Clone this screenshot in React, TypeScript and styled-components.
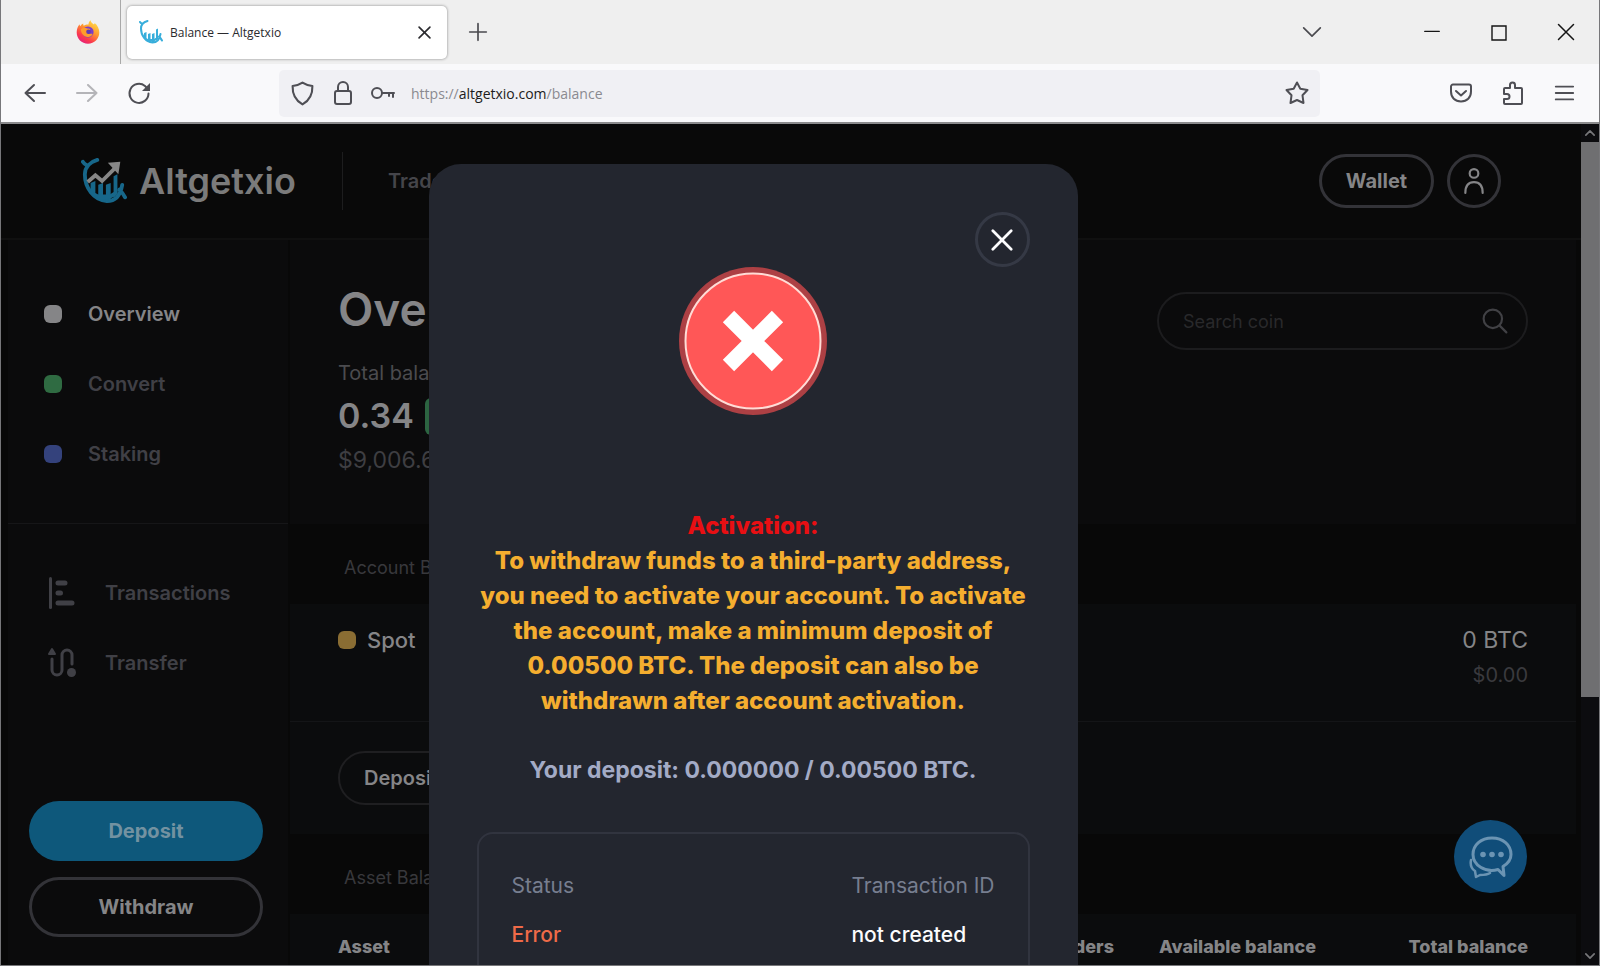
import React from "react";
import styled, { createGlobalStyle } from "styled-components";

const display = `Inter, "Open Sans", "Noto Sans", sans-serif`;
const chrome = `"Open Sans", "Noto Sans", sans-serif`;

const GlobalStyle = createGlobalStyle`
  *, *::before, *::after { box-sizing: border-box; }
  html, body { margin: 0; padding: 0; background: #080808; }
  button, input { font: inherit; color: inherit; margin: 0; }
  button { border: 0; padding: 0; background: none; cursor: pointer; }
  h1, h2, p, dl, dd, ul { margin: 0; padding: 0; }
  ul { list-style: none; }
  a { color: inherit; text-decoration: none; }
  svg { display: block; }
`;

/* ---------- browser window ---------- */

const Window = styled.div`
  display: flex;
  flex-direction: column;
  height: 100vh;
  border: 1px solid #77777a;
  border-top: 0;
  overflow: hidden;
  font-family: ${display};
`;

const TabBar = styled.div`
  display: flex;
  align-items: center;
  flex: none;
  height: 64px;
  background: #efefef;
  color: #4a4a4f;
`;

const PinnedTab = styled.div`
  display: flex;
  align-items: center;
  justify-content: flex-end;
  width: 120px;
  height: 100%;
  padding-right: 20px;
  border-right: 1px solid #a9a9a9;
`;

const Tab = styled.div`
  display: flex;
  align-items: center;
  gap: 7px;
  width: 320px;
  height: 53px;
  margin-left: 6px;
  padding: 0 16px 0 12px;
  border-radius: 5px;
  background: #fff;
  box-shadow: 0 0 3px rgba(0, 0, 0, 0.45);
  color: #2a2a2e;
  font: 12px ${chrome};
`;

const TabTitle = styled.span`
  flex: 1;
`;

const NewTab = styled.button`
  margin-left: 21px;
`;

const WindowControls = styled.div`
  display: flex;
  align-items: center;
  gap: 50px;
  margin-left: auto;
  padding-right: 24px;
  color: #151515;
`;

const TabsMenu = styled.button`
  margin-right: 52px;
  color: #4a4a4f;
`;

const NavBar = styled.div`
  display: flex;
  align-items: center;
  flex: none;
  height: 60px;
  padding: 0 24px 0 22px;
  background: #f9f9fb;
  border-bottom: 2px solid #8b8b8d;
  color: #4f4f55;
`;

const NavButtons = styled.div`
  display: flex;
  gap: 28px;
  width: 256px;
`;

const NavButton = styled.button<{ $dim?: boolean }>`
  opacity: ${(p) => (p.$dim ? 0.4 : 1)};
`;

const AddressBar = styled.div`
  display: flex;
  align-items: center;
  flex: 1;
  gap: 16px;
  height: 47px;
  padding: 0 11px;
  border-radius: 5px;
  background: #f0f0f4;
`;

const Address = styled.div`
  flex: 1;
  color: #8a8a90;
  font: 14px ${chrome};
  b {
    color: #1c1c20;
    font-weight: 400;
  }
`;

const NavTools = styled.div`
  display: flex;
  justify-content: flex-end;
  gap: 28px;
  width: 255px;
`;

const Viewport = styled.div`
  display: flex;
  flex: 1;
  min-height: 0;
  background: #080808;
`;

const Scrollbar = styled.div`
  display: flex;
  flex-direction: column;
  align-items: center;
  width: 18px;
  background: #0c0c0f;
  color: #77777a;
`;

const ScrollArrow = styled.button`
  display: grid;
  place-items: center;
  width: 100%;
  height: 18px;
`;

const ScrollTrack = styled.div`
  flex: 1;
  width: 100%;
`;

const ScrollThumb = styled.div`
  height: 69%;
  background: #6f6f71;
`;

/* ---------- site ---------- */

const Page = styled.div`
  position: relative;
  display: flex;
  flex-direction: column;
  flex: 1;
  min-width: 0;
  overflow: hidden;
  color: #858587;
`;

const Header = styled.header`
  display: flex;
  align-items: center;
  flex: none;
  height: 116px;
  padding: 0 80px;
  background: #090909;
  border-bottom: 2px solid #101010;
`;

const Brand = styled.a`
  display: flex;
  align-items: center;
  gap: 12px;
  width: 261px;
  color: #7b7b7b;
  font-size: 36px;
  font-weight: 600;
`;

const HeaderNav = styled.nav`
  display: flex;
  align-items: center;
  flex: 1;
  height: 58px;
  padding-left: 45px;
  border-left: 1px solid #1d1d1e;
  color: #45454a;
  font-size: 20px;
  font-weight: 600;
`;

const HeaderActions = styled.div`
  display: flex;
  gap: 13px;
`;

const WalletButton = styled.button`
  width: 115px;
  height: 54px;
  border: 3px solid #333338;
  border-radius: 27px;
  font-size: 20px;
  font-weight: 700;
`;

const ProfileButton = styled.button`
  display: grid;
  place-items: center;
  width: 54px;
  height: 54px;
  border: 3px solid #333338;
  border-radius: 50%;
`;

const Body = styled.div`
  display: flex;
  flex: 1;
  gap: 2px;
  min-height: 0;
  padding: 0 5px 0 7px;
`;

const Sidebar = styled.aside`
  display: flex;
  flex-direction: column;
  flex: none;
  width: 280px;
  padding-bottom: 28px;
  background: #0b0b0c;
`;

const SideList = styled.ul<{ $divided?: boolean }>`
  padding: ${(p) => (p.$divided ? "34px 0 0" : "39px 0 34px")};
  border-top: ${(p) => (p.$divided ? "1px solid #161618" : "0")};
`;

const SideLink = styled.a<{ $active?: boolean; $icon?: boolean }>`
  display: flex;
  align-items: center;
  gap: ${(p) => (p.$icon ? 28 : 26)}px;
  height: 70px;
  padding-left: ${(p) => (p.$icon ? 39 : 36)}px;
  color: ${(p) => (p.$active ? "#858587" : "#404046")};
  font-size: 20px;
  font-weight: 600;
`;

const Marker = styled.span<{ $color: string }>`
  flex: none;
  width: 18px;
  height: 18px;
  border-radius: 6px;
  background: ${(p) => p.$color};
`;

const SideActions = styled.div`
  display: flex;
  flex-direction: column;
  gap: 16px;
  margin-top: auto;
  padding: 0 25px 0 21px;
`;

const PillButton = styled.button<{ $primary?: boolean }>`
  height: 60px;
  border: ${(p) => (p.$primary ? "0" : "3px solid #333338")};
  border-radius: 30px;
  background: ${(p) => (p.$primary ? "#0e587b" : "transparent")};
  color: ${(p) => (p.$primary ? "#7392a1" : "#858587")};
  font-size: 20px;
  font-weight: 700;
`;

const Main = styled.main`
  flex: 1;
  min-width: 0;
  overflow: hidden;
`;

const Summary = styled.section`
  display: flex;
  justify-content: space-between;
  height: 284px;
  padding: 42px 48px 0;
  background: #0b0b0c;
  h1 {
    font-size: 46px;
    line-height: 54px;
    font-weight: 600;
  }
`;

const SummaryLabel = styled.p`
  margin-top: 20px;
  color: #4b4b4f;
  font-size: 20px;
  line-height: 34px;
`;

const SummaryAmount = styled.p`
  display: flex;
  align-items: center;
  gap: 11px;
  font-size: 34px;
  line-height: 52px;
  font-weight: 600;
`;

const Badge = styled.span`
  padding: 0 12px;
  border-radius: 6px;
  background: #2c6441;
  font-size: 20px;
  line-height: 37px;
`;

const SummaryFiat = styled.p`
  color: #3e3e42;
  font-size: 23px;
  line-height: 36px;
`;

const Search = styled.form`
  display: flex;
  align-items: center;
  width: 371px;
  height: 58px;
  margin-top: 10px;
  padding: 0 18px 0 24px;
  border: 2px solid #1c1c1e;
  border-radius: 29px;
  color: #414145;
`;

const SearchInput = styled.input`
  flex: 1;
  min-width: 0;
  padding: 0;
  border: 0;
  outline: 0;
  background: transparent;
  font-size: 18px;
  &::placeholder {
    color: #29292b;
    opacity: 1;
  }
`;

const SectionTitle = styled.h2`
  padding-left: 54px;
  color: #38383c;
  font-size: 18px;
  font-weight: 400;
  line-height: 72px;
  padding-top: 8px;
`;

const Account = styled.section`
  display: flex;
  justify-content: space-between;
  height: 118px;
  padding: 18px 48px;
  background: #0b0c0d;
  border-bottom: 1px solid #141517;
`;

const AccountName = styled.div`
  display: flex;
  align-items: center;
  gap: 11px;
  height: 36px;
  font-size: 22px;
  font-weight: 500;
`;

const AccountValue = styled.div`
  text-align: right;
  font-size: 23px;
  line-height: 36px;
  p + p {
    color: #3a3a3e;
    font-size: 20px;
    line-height: 34px;
  }
`;

const AccountActions = styled.div`
  height: 112px;
  padding: 29px 48px;
  background: #0b0c0d;
`;

const OutlineButton = styled.button`
  height: 54px;
  padding: 0 24px;
  border: 2px solid #1f1f21;
  border-radius: 27px;
  font-size: 20px;
  font-weight: 600;
`;

const AssetPanel = styled.section`
  padding: 19px 48px;
  background: #0b0c0d;
`;

const AssetTable = styled.table`
  width: 100%;
  table-layout: fixed;
  border-collapse: collapse;
  th {
    padding: 0;
    font-size: 18px;
    line-height: 28px;
    font-weight: 800;
    text-align: right;
    white-space: nowrap;
  }
  th:first-child {
    text-align: left;
  }
  th:nth-child(3) {
    width: 202px;
  }
  th:nth-child(4) {
    width: 212px;
  }
`;

const ChatButton = styled.button`
  position: absolute;
  right: 54px;
  bottom: 72px;
  display: grid;
  place-items: center;
  width: 73px;
  height: 73px;
  border-radius: 50%;
  background: #104d79;
`;

/* ---------- dialog ---------- */

const Overlay = styled.div`
  position: absolute;
  inset: 0;
  display: flex;
  justify-content: center;
  align-items: flex-start;
  padding: 40px 76px 0 0;
`;

const Dialog = styled.div`
  display: flex;
  flex-direction: column;
  width: 649px;
  padding: 48px;
  border-radius: 32px;
  background: #23262f;
`;

const CloseButton = styled.button`
  display: grid;
  place-items: center;
  align-self: flex-end;
  width: 55px;
  height: 55px;
  border: 3px solid #353945;
  border-radius: 50%;
  color: #fcfcfd;
`;

const ErrorArt = styled.div`
  align-self: center;
`;

const Message = styled.div`
  display: flex;
  flex-direction: column;
  align-items: center;
  margin-top: 93px;
  color: #f5ae2f;
  font-size: 24px;
  font-weight: 800;
  line-height: 35px;
  text-align: center;
  white-space: nowrap;
  h2 {
    color: #e80f13;
    font: inherit;
  }
`;

const DepositLine = styled.p`
  margin-top: 35px;
  color: #a3abc6;
  font-size: 23px;
  font-weight: 700;
`;

const Details = styled.dl`
  display: flex;
  justify-content: space-between;
  margin-top: 44px;
  padding: 35px 33px 60px;
  border: 2px solid #31343f;
  border-radius: 16px;
  font-size: 21px;
  line-height: 34px;
  dt {
    color: #777e90;
  }
  dd {
    margin-top: 15px;
  }
`;

const DetailValue = styled.dd<{ $error?: boolean }>`
  color: ${(p) => (p.$error ? "#ef6a48" : "#fcfcfd")};
  font-weight: 500;
`;

/* ---------- drawings ---------- */

type StrokeProps = { size: number; width?: number; children: React.ReactNode };
const Icon = ({ size, width = 2, children }: StrokeProps) => (
  <svg width={size} height={size} viewBox="0 0 24 24" fill="none" stroke="currentColor"
    strokeWidth={width} strokeLinecap="round" strokeLinejoin="round" aria-hidden="true">
    {children}
  </svg>
);

const Firefox = () => (
  <svg width="24" height="24" viewBox="0 0 24 24" aria-hidden="true">
    <defs>
      <linearGradient id="flame" x1="0.85" y1="0.05" x2="0.25" y2="1">
        <stop offset="0" stopColor="#ffe14a" />
        <stop offset="0.4" stopColor="#ff9a2e" />
        <stop offset="0.75" stopColor="#fb3a4c" />
        <stop offset="1" stopColor="#e31d80" />
      </linearGradient>
    </defs>
    <path fill="url(#flame)" d="M12.5 4.5C12.6 2.6 13.4 1.2 14.6.3c.1 1.8 1.4 2.8 2.8 4 1-.1 1.2-.8 1.2-1.4C21.500 5 23.300 8.600 23.300 12.500 23.300 18.700 18.300 23.700 12 23.700S.7 18.700.7 12.500C.7 9.500 1.700 6.500 3.600 4.300c0 .8.2 1.500.6 2 .9-1.300 1.900-2.300 3-2.800-.1.900.1 1.700.5 2.300 1.300-.9 3-1.400 4.800-1.300z" />
    <circle cx="12" cy="12" r="5.600" fill="#7a3fc8" />
    <path fill="#ff9c2b" d="M4.800 9.200C6.300 7.600 9 7 11.300 8.500c1.700.1 2.800.3 3 .9-.3 1-1.900 1.400-2.900 1.900-.8.600-.6 1.800.6 2.300 1.500.5 3.200-.2 4.600.4-.8 2.200-3 3.300-5.100 3C7.700 16.500 5 13.500 4.800 9.200z" />
    <circle cx="12.500" cy="11.700" r="2.300" fill="#5f3bb5" />
  </svg>
);

const BrandMark = ({ size, color, arrow }: { size: number; color: string; arrow?: string }) => (
  <svg width={size} height={size} viewBox="0 0 48 48" fill="none" aria-hidden="true">
    <path d="M2 4c1 2 3 3 5 4M17 2C10 4 4 9 4 17c0 14 9 27 23 28 8 0 14-5 16-17M40 33c2 2 4 4 6 8"
      stroke={color} strokeWidth="4" strokeLinecap="round" />
    <path d="M10 26l5-2v17l-5-4zM18 28l5-2v19l-5-2zM26 28l5-2v18l-5 1zM34 19l4-2v20l-4 5z" fill={color} />
    <path d="M8 33l10 5h12l8-5v4c-6 8-22 10-30-4z" fill={color} />
    {arrow && (
      <>
        <path d="M7 25l8-7 7 6L36 10" stroke={arrow} strokeWidth="4" />
        <path d="M28 5l13-1-2 13z" fill={arrow} />
      </>
    )}
  </svg>
);

const TransactionsIcon = () => (
  <svg width="30" height="32" viewBox="0 0 30 32" stroke="#404046" strokeLinecap="round" aria-hidden="true">
    <path d="M3.500 1.500v29" strokeWidth="3" />
    <path d="M11 6h7M11 16h2.500M11 26h14" strokeWidth="5" />
  </svg>
);

const TransferIcon = () => (
  <svg width="30" height="32" viewBox="0 0 30 32" fill="none" stroke="#404046" strokeLinecap="round" aria-hidden="true">
    <path d="M5 12v11a5 5 0 0 0 10 0V8a5 5 0 0 1 10 0v9" strokeWidth="3" />
    <path d="M5 2L8 7H2z" fill="#404046" strokeWidth="2" strokeLinejoin="round" />
    <circle cx="24.500" cy="25.500" r="4.500" fill="#404046" stroke="none" />
  </svg>
);

const ChatIcon = () => (
  <svg width="44" height="44" viewBox="0 0 44 44" fill="none" stroke="#6b94b3" strokeWidth="3"
    strokeLinecap="round" strokeLinejoin="round" aria-hidden="true">
    <path d="M29 34.500C16 38 4 30 4 19.500 4 10 12 3 23 3s19 7 19 16.500c0 5-3 9-8 12l1 9z" />
    <path d="M2 25c-1 5 1 9 4 11l1 6 4-2c4 0 7 0 10-2" strokeWidth="2.500" />
    <g fill="#6b94b3" stroke="none">
      <circle cx="14" cy="19.500" r="2.800" />
      <circle cx="23" cy="19.500" r="2.800" />
      <circle cx="32" cy="19.500" r="2.800" />
    </g>
  </svg>
);

const ErrorIcon = () => (
  <svg width="148" height="148" viewBox="0 0 148 148" aria-hidden="true">
    <circle cx="74" cy="74" r="74" fill="#ad4044" />
    <circle cx="74" cy="74" r="67.500" fill="#ff5757" stroke="#ffdcd6" strokeWidth="2" />
    <path d="M49.500 49.500l49 49M98.500 49.500l-49 49" stroke="#fff" strokeWidth="16" />
  </svg>
);

const Cross = ({ size, width }: { size: number; width: number }) => (
  <Icon size={size} width={width}><path d="M2 2l20 20M22 2L2 22" /></Icon>
);

/* ---------- page ---------- */

const sections = [
  { name: "Overview", color: "#858587", active: true },
  { name: "Convert", color: "#2f6b42" },
  { name: "Staking", color: "#34427c" },
];

const activationLines = [
  "To withdraw funds to a third-party address,",
  "you need to activate your account. To activate",
  "the account, make a minimum deposit of",
  "0.00500 BTC. The deposit can also be",
  "withdrawn after account activation.",
];

export default function App() {
  return (
    <Window>
      <GlobalStyle />
      <TabBar>
        <PinnedTab><Firefox /></PinnedTab>
        <Tab>
          <BrandMark size={24} color="#38aedb" />
          <TabTitle>Balance — Altgetxio</TabTitle>
          <button aria-label="Close tab"><Cross size={13} width={3} /></button>
        </Tab>
        <NewTab aria-label="New tab">
          <Icon size={20} width={2}><path d="M12 2v20M2 12h20" /></Icon>
        </NewTab>
        <WindowControls>
          <TabsMenu aria-label="List all tabs">
            <Icon size={20} width={2}><path d="M2 7l10 10L22 7" /></Icon>
          </TabsMenu>
          <button aria-label="Minimize">
            <Icon size={16} width={2}><path d="M1 11h22" /></Icon>
          </button>
          <button aria-label="Maximize">
            <svg width="17" height="17" fill="none" stroke="currentColor" strokeWidth="1.400"><path d="M2 2h14v14H2z" /></svg>
          </button>
          <button aria-label="Close window"><Cross size={18} width={2} /></button>
        </WindowControls>
      </TabBar>

      <NavBar>
        <NavButtons>
          <NavButton aria-label="Back">
            <Icon size={24}><path d="M22 12H2.500M11 4l-8.500 8 8.500 8" /></Icon>
          </NavButton>
          <NavButton aria-label="Forward" $dim>
            <Icon size={24}><path d="M2 12h19.500M13 4l8.500 8-8.500 8" /></Icon>
          </NavButton>
          <NavButton aria-label="Reload">
            <Icon size={24}>
              <path d="M21.500 12.500A9.500 9.500 0 1 1 18 5l3 3" />
              <path d="M23 2v8h-8z" fill="currentColor" stroke="none" />
            </Icon>
          </NavButton>
        </NavButtons>
        <AddressBar>
          <Icon size={25}><path d="M12 1.500c3 2 6 2.800 9.500 3.300.3 8-2.500 13.700-9.500 17.700C5 18.500 2.200 12.800 2.500 4.800 6 4.300 9 3.500 12 1.500z" /></Icon>
          <Icon size={24}><rect x="4" y="10" width="16" height="13" rx="2" /><path d="M7 10V6a5 5 0 0 1 10 0v4" /></Icon>
          <Icon size={24}><circle cx="6" cy="12" r="5" /><path d="M11 12h12M22 12v4M18 12v3" /></Icon>
          <Address>https://<b>altgetxio.com</b>/balance</Address>
          <Icon size={24}><path d="M12 1.500l3.300 6.300 7.200 1.200-5 5.300 1 7.700-6.500-3-6.500 3 1-7.700-5-5.300 7.200-1.200z" /></Icon>
        </AddressBar>
        <NavTools>
          <button aria-label="Save to Pocket">
            <Icon size={24}><path d="M4 3.500h16a2 2 0 0 1 2 2v5c0 6-4 10-10 10s-10-4-10-10v-5a2 2 0 0 1 2-2zM7 10l5 4.500 5-4.500" /></Icon>
          </button>
          <button aria-label="Extensions">
            <Icon size={24}><path d="M3 8a1 1 0 0 1 1-1h5V4a2.500 2.500 0 0 1 5 0v3h6a1 1 0 0 1 1 1v14a1 1 0 0 1-1 1H4a1 1 0 0 1-1-1v-4h3a2.500 2.500 0 0 0 0-5H3z" /></Icon>
          </button>
          <button aria-label="Application menu">
            <Icon size={22}><path d="M3 5h19M3 12h19M3 19h19" /></Icon>
          </button>
        </NavTools>
      </NavBar>

      <Viewport>
        <Page>
          <Header>
            <Brand href="#home">
              <BrandMark size={46} color="#17678a" arrow="#878787" />
              Altgetxio
            </Brand>
            <HeaderNav><a href="#trade">Trade</a></HeaderNav>
            <HeaderActions>
              <WalletButton>Wallet</WalletButton>
              <ProfileButton aria-label="Profile">
                <Icon size={26} width={2}><circle cx="12" cy="5" r="4" /><path d="M4 23c0-7 3-10 8-10s8 3 8 10" /></Icon>
              </ProfileButton>
            </HeaderActions>
          </Header>

          <Body>
            <Sidebar>
              <nav>
                <SideList>
                  {sections.map((s) => (
                    <li key={s.name}>
                      <SideLink href={`#${s.name.toLowerCase()}`} $active={s.active}>
                        <Marker $color={s.color} />
                        {s.name}
                      </SideLink>
                    </li>
                  ))}
                </SideList>
                <SideList $divided>
                  <li><SideLink href="#transactions" $icon><TransactionsIcon />Transactions</SideLink></li>
                  <li><SideLink href="#transfer" $icon><TransferIcon />Transfer</SideLink></li>
                </SideList>
              </nav>
              <SideActions>
                <PillButton $primary>Deposit</PillButton>
                <PillButton>Withdraw</PillButton>
              </SideActions>
            </Sidebar>

            <Main>
              <Summary>
                <div>
                  <h1>Overview</h1>
                  <SummaryLabel>Total balance</SummaryLabel>
                  <SummaryAmount>0.34 <Badge>BTC</Badge></SummaryAmount>
                  <SummaryFiat>$9,006.6</SummaryFiat>
                </div>
                <Search role="search">
                  <SearchInput type="search" aria-label="Search coin" placeholder="Search coin" />
                  <Icon size={26} width={2}><circle cx="10" cy="10" r="8.500" /><path d="M16.500 16.500l6 6" /></Icon>
                </Search>
              </Summary>
              <SectionTitle>Account Balances</SectionTitle>
              <Account>
                <AccountName><Marker $color="#8a6d33" />Spot</AccountName>
                <AccountValue><p>0 BTC</p><p>$0.00</p></AccountValue>
              </Account>
              <AccountActions><OutlineButton>Deposit</OutlineButton></AccountActions>
              <SectionTitle>Asset Balances</SectionTitle>
              <AssetPanel>
                <AssetTable>
                  <thead>
                    <tr><th>Asset</th><th>In orders</th><th>Available balance</th><th>Total balance</th></tr>
                  </thead>
                </AssetTable>
              </AssetPanel>
            </Main>
          </Body>

          <ChatButton aria-label="Open chat"><ChatIcon /></ChatButton>

          <Overlay>
            <Dialog role="dialog" aria-modal="true" aria-labelledby="activation">
              <CloseButton aria-label="Close"><Cross size={22} width={3} /></CloseButton>
              <ErrorArt><ErrorIcon /></ErrorArt>
              <Message>
                <h2 id="activation">Activation:</h2>
                {activationLines.map((line) => <p key={line}>{line}</p>)}
                <DepositLine>Your deposit: 0.000000 / 0.00500 BTC.</DepositLine>
              </Message>
              <Details>
                <div><dt>Status</dt><DetailValue $error>Error</DetailValue></div>
                <div><dt>Transaction ID</dt><DetailValue>not created</DetailValue></div>
              </Details>
            </Dialog>
          </Overlay>
        </Page>
        <Scrollbar>
          <ScrollArrow aria-label="Scroll up"><Icon size={10} width={4}><path d="M2 17L12 7l10 10" /></Icon></ScrollArrow>
          <ScrollTrack><ScrollThumb /></ScrollTrack>
          <ScrollArrow aria-label="Scroll down"><Icon size={10} width={4}><path d="M2 7l10 10L22 7" /></Icon></ScrollArrow>
        </Scrollbar>
      </Viewport>
    </Window>
  );
}
